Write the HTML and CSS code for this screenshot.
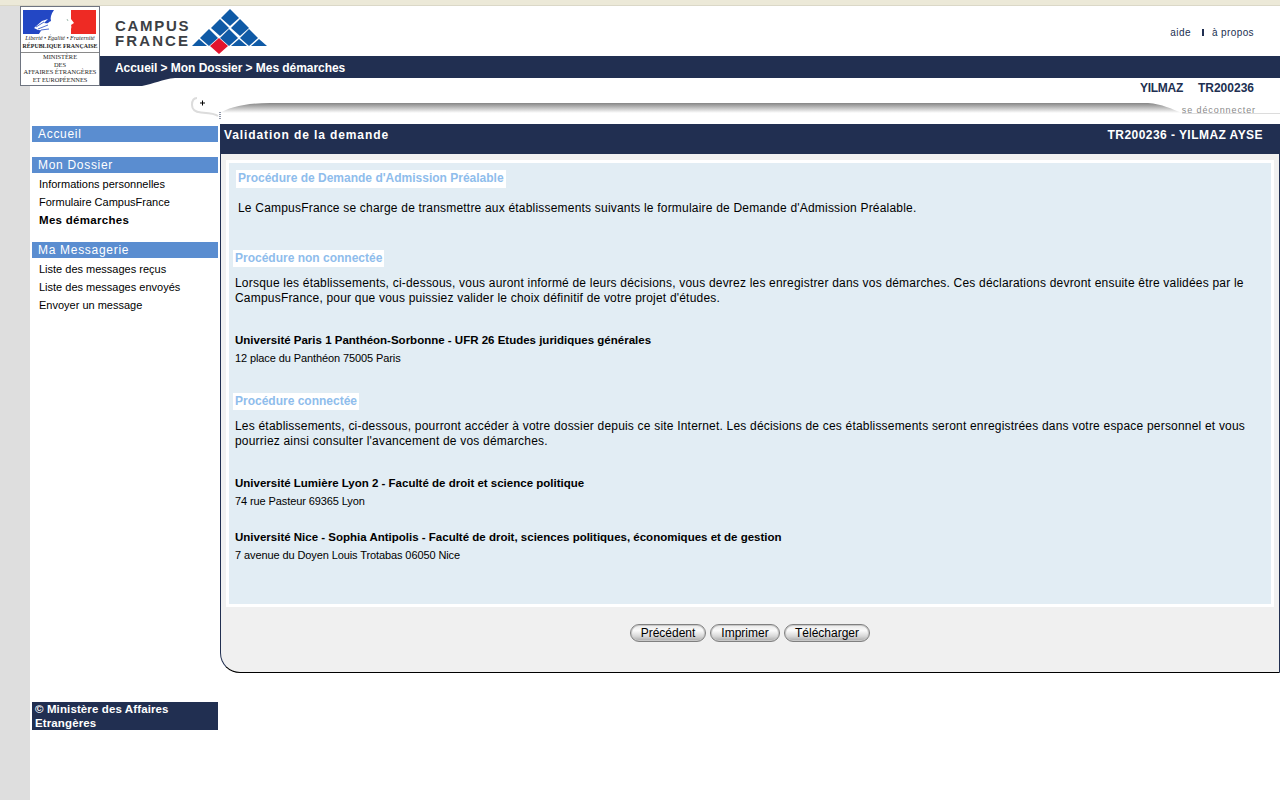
FILE: index.html
```html
<!DOCTYPE html>
<html lang="fr">
<head>
  <meta charset="UTF-8">
  <title>CampusFrance - Mes démarches</title>
  <link rel="stylesheet" href="styles.css">
</head>
<body>
  <div class="topstrip"></div>

  <!-- logo ministere, lies over the gutter and the nav bar -->
  <div class="minlogo">
    <svg class="flag" width="73" height="24" viewBox="0 0 73 24">
      <rect width="73" height="24" fill="#fff"/>
      <rect width="31" height="24" fill="#2347c4"/>
      <rect x="48" width="25" height="24" fill="#ee2a24"/>
      <path d="M31 0 C28 4 27 8 28 11 C24 13 20 17 16 24 H44 L45 20 C48 20 49 18 48 15 L51 13 L48 9 C48 4 48 2 47 0 Z" fill="#fff"/>
      <path d="M11 18 L19 11 L25 9 L21 13 L29 14 L22 17 L27 21 L15 20 Z" fill="#fff"/>
      <path d="M13 17 L21 12 M15 19 L25 15 M18 20 L26 19" stroke="#2347c4" stroke-width="0.8" fill="none"/>
      <path d="M44 9 L45 11" stroke="#8a9" stroke-width="0.8"/>
    </svg>
    <div class="devise">Liberté • Égalité • Fraternité</div>
    <div class="repub">RÉPUBLIQUE FRANÇAISE</div>
    <div class="minline">MINISTÈRE</div>
    <div class="minline">DES</div>
    <div class="minline">AFFAIRES ÉTRANGÈRES</div>
    <div class="minline">ET EUROPÉENNES</div>
  </div>

  <svg class="navcurve" width="80" height="8" viewBox="0 0 80 8">
    <path d="M0 0 H75 C62 1 54 6 42 8 H0 Z" fill="#212f51"/>
  </svg>

  <div class="shell">
    <div class="header">
      <div class="brand">
        <div class="brandname">
          <div class="brand-campus">CAMPUS</div>
          <div class="brand-france">FRANCE</div>
        </div>
        <svg class="diamonds" width="76" height="46" viewBox="0 0 76 46">
          <g fill="#0f5aa6">
            <path d="M38 0 L47 9 L38 17 L29 9 Z"/>
            <path d="M28 10 L37 19 L28 27 L19 19 Z"/>
            <path d="M48 10 L57 19 L48 27 L39 19 Z"/>
            <path d="M17 20 L26 29 L17 37 L8 29 Z"/>
            <path d="M37 20 L46 29 L37 37 L28 29 Z"/>
            <path d="M57 20 L66 29 L57 37 L48 29 Z"/>
            <path d="M7 30 L15 37 H0 Z"/>
            <path d="M47 30 L55 37 H39 Z"/>
            <path d="M67 30 L75 37 H59 Z"/>
          </g>
          <path d="M27 29 L36 37 L27 45 L18 37 Z" fill="#e2132d"/>
        </svg>
      </div>
      <div class="toplinks">
        <a class="toplink">aide</a>
        <span class="topsep"></span>
        <a class="toplink">à propos</a>
      </div>
    </div>

    <div class="navbar">Accueil &gt; Mon Dossier &gt; Mes démarches</div>

    <div class="userline">
      <span class="username">YILMAZ</span>
      <span>TR200236</span>
    </div>

    <div class="swooshrow">
      <svg class="swoosh" width="1090" height="22" viewBox="0 0 1090 22">
        <defs>
          <linearGradient id="band" gradientUnits="userSpaceOnUse" x1="0" y1="6" x2="0" y2="16">
            <stop offset="0" stop-color="#858585"/>
            <stop offset="1" stop-color="#fff"/>
          </linearGradient>
        </defs>
        <path d="M29 17 C38 10 56 6 80 6 H958 C972 7 982 12 992 16 H29 Z" fill="url(#band)"/>
        <path d="M992 16.5 H1090" stroke="#dcdcdc" stroke-width="1"/>
        <path d="M7 1 C3 1 2 4 2 8 C2 13 5 15 11 15.5 C18 16 24 16 28 19" stroke="#dcdcdc" stroke-width="2" fill="none"/>
        <path d="M10 6 H15 M12.5 3.5 V8.5" stroke="#000" stroke-width="1"/>
        <path d="M30 15 V22" stroke="#212f51" stroke-width="1" stroke-dasharray="1 1"/>
      </svg>
      <a class="logout">se déconnecter</a>
    </div>

    <div class="main">
      <div class="sidebar">
        <div class="sidehead">Accueil</div>

        <div class="sidehead sidehead-gap">Mon Dossier</div>
        <div class="sideitem">Informations personnelles</div>
        <div class="sideitem">Formulaire CampusFrance</div>
        <div class="sideitem sideitem-on">Mes démarches</div>

        <div class="sidehead sidehead-gap">Ma Messagerie</div>
        <div class="sideitem">Liste des messages reçus</div>
        <div class="sideitem">Liste des messages envoyés</div>
        <div class="sideitem">Envoyer un message</div>

        <div class="copyright">© Ministère des Affaires Etrangères</div>
      </div>

      <div class="content">
        <div class="titlebar">
          <span>Validation de la demande</span>
          <span class="titleuser">TR200236 - YILMAZ AYSE</span>
        </div>

        <div class="panel">
          <div class="box">
            <h3 class="chip chip-first">Procédure de Demande d'Admission Préalable</h3>
            <p class="para para-first">Le CampusFrance se charge de transmettre aux établissements suivants le formulaire de Demande d'Admission Préalable.</p>

            <h3 class="chip chip-second">Procédure non connectée</h3>
            <p class="para">Lorsque les établissements, ci-dessous, vous auront informé de leurs décisions, vous devrez les enregistrer dans vos démarches. Ces déclarations devront ensuite être validées par le CampusFrance, pour que vous puissiez valider le choix définitif de votre projet d'études.</p>
            <div class="school school-first">Université Paris 1 Panthéon-Sorbonne - UFR 26 Etudes juridiques générales</div>
            <div class="addr">12 place du Panthéon 75005 Paris</div>

            <h3 class="chip chip-third">Procédure connectée</h3>
            <p class="para">Les établissements, ci-dessous, pourront accéder à votre dossier depuis ce site Internet. Les décisions de ces établissements seront enregistrées dans votre espace personnel et vous pourriez ainsi consulter l'avancement de vos démarches.</p>
            <div class="school school-first">Université Lumière Lyon 2 - Faculté de droit et science politique</div>
            <div class="addr">74 rue Pasteur 69365 Lyon</div>
            <div class="school school-next">Université Nice - Sophia Antipolis - Faculté de droit, sciences politiques, économiques et de gestion</div>
            <div class="addr">7 avenue du Doyen Louis Trotabas 06050 Nice</div>
          </div>

          <div class="buttons">
            <button class="btn btn-prev">Précédent</button>
            <button class="btn btn-print">Imprimer</button>
            <button class="btn btn-dl">Télécharger</button>
          </div>
        </div>
      </div>
    </div>
  </div>
</body>
</html>
```

FILE: styles.css
```css
body {
  margin: 0;
  background-color: #dedede;
  font-family: "Liberation Sans", Arial, sans-serif;
  font-size: 12px;
  color: #000;
}

.topstrip {
  height: 6px;
  background: linear-gradient(#ece9d8 80%, #cfccbc);
}

.shell {
  margin-left: 30px;
  height: 794px;
  background-color: #fff;
  overflow: hidden;
}

/* logo ministere */
.minlogo {
  position: absolute;
  left: 20px;
  top: 6px;
  width: 78px;
  height: 78px;
  border: 1px solid #6e7480;
  background-color: #fff;
  text-align: center;
  font-family: "Liberation Serif", serif;
  color: #222;
}

.flag {
  display: block;
  margin: 3px 0 0 2px;
}

.devise {
  margin-top: 1px;
  font-size: 6px;
  line-height: 7px;
  font-style: italic;
  white-space: nowrap;
}

.repub {
  font-size: 5.9px;
  line-height: 9px;
  font-weight: bold;
  white-space: nowrap;
  border-bottom: 1px solid #8a8a8a;
  padding-bottom: 1px;
}

.minline {
  font-size: 6.4px;
  line-height: 7.7px;
  white-space: nowrap;
}

.navcurve {
  position: absolute;
  left: 100px;
  top: 78px;
}

.header {
  height: 50px;
  display: flex;
  justify-content: space-between;
}

.brand {
  display: flex;
  margin-left: 85px;
}

.brandname {
  width: 77px;
  margin-top: 12px;
  font-size: 15px;
  line-height: 15px;
  font-weight: bold;
  color: #3c3f45;
}

.brand-campus {
  letter-spacing: 1.7px;
}

.brand-france {
  letter-spacing: 2.1px;
}

.diamonds {
  margin-top: 3px;
}

.toplinks {
  display: flex;
  align-items: center;
  height: 52px;
  margin-right: 26px;
  font-size: 10px;
  letter-spacing: 0.4px;
  color: #212f51;
}

.topsep {
  width: 2px;
  height: 7px;
  margin: 0 8px 0 11px;
  background-color: #212f51;
}

.navbar {
  height: 22px;
  margin-left: 70px;
  padding-left: 15px;
  background-color: #212f51;
  color: #fff;
  font-weight: bold;
  line-height: 24px;
  letter-spacing: -0.05px;
}

.userline {
  display: flex;
  justify-content: flex-end;
  gap: 15px;
  height: 19px;
  margin-right: 26px;
  font-weight: bold;
  line-height: 21px;
  color: #212f51;
}

.username {
  letter-spacing: -0.3px;
}

.swooshrow {
  position: relative;
  height: 27px;
  margin-left: 160px;
}

.swoosh {
  display: block;
}

.logout {
  position: absolute;
  right: 24px;
  top: 8px;
  font-size: 9px;
  letter-spacing: 0.9px;
  color: #8a8a8a;
}

/* colonnes */
.main {
  display: flex;
  gap: 2px;
}

.sidebar {
  display: flex;
  flex-direction: column;
  width: 186px;
  height: 606px;
  margin-left: 2px;
  flex-shrink: 0;
}

.sidehead {
  height: 16px;
  margin-top: 2px;
  padding-left: 6px;
  background-color: #5a8dd0;
  color: #fff;
  line-height: 16px;
  letter-spacing: 0.7px;
}

.sidehead-gap {
  margin-top: 15px;
}

.sideitem {
  height: 18px;
  padding-left: 7px;
  font-size: 11px;
  line-height: 22px;
}

.sideitem-on {
  font-weight: bold;
  font-size: 11.5px;
  letter-spacing: 0.3px;
}

.copyright {
  margin-top: auto;
  height: 28px;
  padding-left: 3px;
  background-color: #212f51;
  color: #fff;
  font-size: 11.5px;
  font-weight: bold;
  line-height: 14px;
  letter-spacing: 0.12px;
}

.content {
  width: 1060px;
}

.titlebar {
  display: flex;
  justify-content: space-between;
  height: 30px;
  padding: 0 17px 0 4px;
  background-color: #212f51;
  color: #fff;
  font-weight: bold;
  line-height: 23px;
  letter-spacing: 0.9px;
}

.titleuser {
  letter-spacing: 0.45px;
}

.panel {
  height: 512px;
  padding-top: 6px;
  border-left: 1px solid #212f51;
  border-bottom: 1px solid #000;
  border-right: 1px solid #212f51;
  border-bottom-left-radius: 20px;
  background-color: #f0f0f0;
}

.box {
  height: 441px;
  margin: 0 5px;
  border: 3px solid #fff;
  background-color: #e2edf4;
  padding: 0 6px;
}

.chip {
  display: table;
  margin: 0;
  padding: 0 2px;
  background-color: #fff;
  color: #8fbdec;
  font-size: 12px;
  line-height: 17px;
  font-weight: bold;
}

.chip-first {
  margin: 7px 0 0 1px;
  padding-bottom: 1px;
}

.chip-second {
  margin: 34px 0 0 -2px;
}

.chip-third {
  margin: 27px 0 0 -2px;
}

.para {
  margin: 9px 0 0 0;
  line-height: 15px;
  letter-spacing: 0.2px;
}

.para-first {
  margin: 13px 0 0 3px;
}

.school {
  font-size: 11.5px;
  font-weight: bold;
  line-height: 15px;
}

.school-first {
  margin-top: 27px;
}

.school-next {
  margin-top: 21px;
}

.addr {
  margin-top: 3px;
  font-size: 11px;
  line-height: 15px;
  letter-spacing: -0.1px;
}

.buttons {
  display: flex;
  justify-content: center;
  gap: 4px;
  margin-top: 17px;
}

.btn {
  height: 18px;
  padding: 0;
  border: 1px solid #808080;
  border-radius: 9px;
  background: linear-gradient(#e8e8e8, #fafafa 35%, #d8d8d8 70%, #a8a8a8);
  box-shadow: inset 0 0 0 1px #c8c8c8;
  font-family: "Liberation Sans", Arial, sans-serif;
  font-size: 12px;
  line-height: 16px;
  color: #000;
}

.btn-prev {
  width: 76px;
}

.btn-print {
  width: 70px;
}

.btn-dl {
  width: 86px;
}
```
